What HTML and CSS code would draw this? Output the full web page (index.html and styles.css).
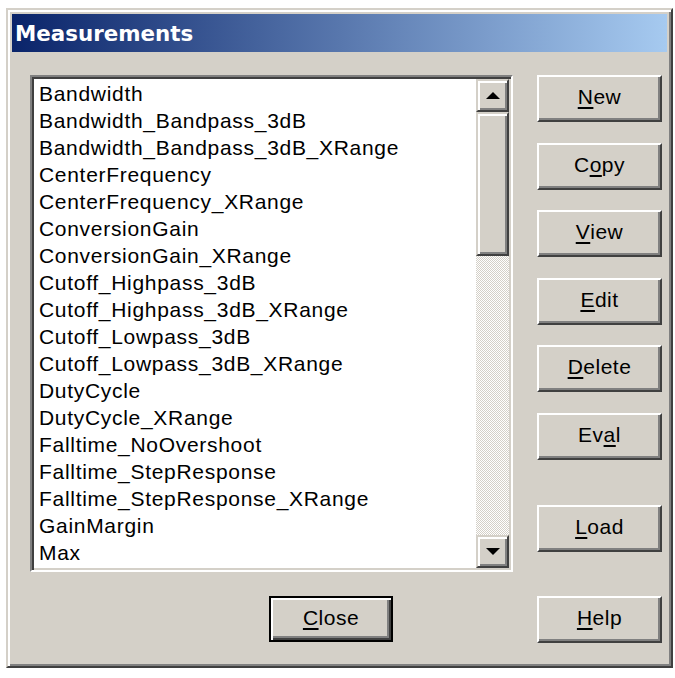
FILE: index.html
```html
<!DOCTYPE html>
<html lang="en">
<head>
<meta charset="UTF-8" />
<meta name="viewport" content="width=device-width, initial-scale=1" />
<title>Measurements</title>
<link rel="stylesheet" href="styles.css">
</head>
<body>
  <div class="window">
    <div class="titlebar">Measurements</div>
    <div class="content">
      <div class="left">
        <div class="listbox">
          <ul class="items">
            <li>Bandwidth</li>
            <li>Bandwidth_Bandpass_3dB</li>
            <li>Bandwidth_Bandpass_3dB_XRange</li>
            <li>CenterFrequency</li>
            <li>CenterFrequency_XRange</li>
            <li>ConversionGain</li>
            <li>ConversionGain_XRange</li>
            <li>Cutoff_Highpass_3dB</li>
            <li>Cutoff_Highpass_3dB_XRange</li>
            <li>Cutoff_Lowpass_3dB</li>
            <li>Cutoff_Lowpass_3dB_XRange</li>
            <li>DutyCycle</li>
            <li>DutyCycle_XRange</li>
            <li>Falltime_NoOvershoot</li>
            <li>Falltime_StepResponse</li>
            <li>Falltime_StepResponse_XRange</li>
            <li>GainMargin</li>
            <li>Max</li>
          </ul>
          <div class="scrollbar">
            <div class="sb-btn">
              <svg width="14" height="7" viewBox="0 0 14 7"><polygon points="0,7 7,0 14,7" fill="#000"/></svg>
            </div>
            <div class="sb-track">
              <div class="sb-thumb"></div>
            </div>
            <div class="sb-btn">
              <svg width="14" height="7" viewBox="0 0 14 7"><polygon points="0,0 14,0 7,7" fill="#000"/></svg>
            </div>
          </div>
        </div>
        <button class="btn default close-btn"><u>C</u>lose</button>
      </div>
      <div class="right">
        <div class="btn-group">
          <button class="btn"><u>N</u>ew</button>
          <button class="btn">C<u>o</u>py</button>
          <button class="btn"><u>V</u>iew</button>
          <button class="btn"><u>E</u>dit</button>
          <button class="btn"><u>D</u>elete</button>
          <button class="btn">Ev<u>a</u>l</button>
        </div>
        <button class="btn load-btn"><u>L</u>oad</button>
        <button class="btn help-btn"><u>H</u>elp</button>
      </div>
    </div>
  </div>
</body>
</html>
```

FILE: styles.css
```css
/* Classic dialog look */
* {
  box-sizing: border-box;
}
body {
  margin: 0;
  background: #ffffff;
  font-family: "Liberation Sans", Arial, sans-serif;
  color: #000;
}
.window {
  margin: 8px 0 0 6px;
  width: 667px;
  height: 660px;
  padding: 4px;
  background: #d4d0c8;
  border: 2px solid;
  border-color: #d4d0c8 #404040 #404040 #d4d0c8;
  box-shadow: inset 2px 2px #ffffff, inset -2px -2px #808080;
  display: flex;
  flex-direction: column;
}
.titlebar {
  height: 38px;
  padding: 1px 0 0 3px;
  display: flex;
  align-items: center;
  background: linear-gradient(to right, #0a246a, #a6caf0);
  color: #ffffff;
  font-family: "DejaVu Sans", Verdana, sans-serif;
  font-weight: 700;
  font-size: 21.4px;
}
.content {
  display: flex;
  gap: 24px;
  padding: 23px 0 0 18px;
}
.left {
  width: 483px;
  display: flex;
  flex-direction: column;
}

/* List box with its scrollbar */
.listbox {
  height: 497px;
  display: flex;
  background: #ffffff;
  border: 2px solid;
  border-color: #808080 #ffffff #ffffff #808080;
  box-shadow: inset 2px 2px #404040, inset -2px -2px #d4d0c8;
  padding: 2px;
}
.items {
  flex-grow: 1;
  list-style: none;
  margin: 0;
  padding: 1px 0 0 5px;
  overflow: hidden;
  font-size: 21px;
  letter-spacing: 0.7px;
  line-height: 27px;
  white-space: nowrap;
}
.scrollbar {
  width: 33px;
  display: flex;
  flex-direction: column;
}
.sb-btn {
  height: 33px;
  display: flex;
  align-items: center;
  justify-content: center;
  background: #d4d0c8;
  border: 2px solid;
  border-color: #d4d0c8 #404040 #404040 #d4d0c8;
  box-shadow: inset 2px 2px #ffffff, inset -2px -2px #808080;
}
.sb-track {
  flex-grow: 1;
  background-color: #d4d0c8;
  background-image: repeating-conic-gradient(#ffffff 0 25%, #d4d0c8 0 50%);
  background-size: 2px 2px;
}
.sb-thumb {
  height: 144px;
  background: #d4d0c8;
  border: 2px solid;
  border-color: #d4d0c8 #404040 #404040 #d4d0c8;
  box-shadow: inset 2px 2px #ffffff, inset -2px -2px #808080;
}

/* Push buttons */
.btn {
  width: 125px;
  height: 47px;
  margin: 0;
  padding: 0 0 3px 0;
  background: #d4d0c8;
  border: 2px solid;
  border-color: #ffffff #404040 #404040 #ffffff;
  box-shadow: inset -2px -2px #808080;
  font-family: "Liberation Sans", Arial, sans-serif;
  font-size: 21px;
  letter-spacing: 0.5px;
  color: #000;
  display: flex;
  align-items: center;
  justify-content: center;
}
.btn u {
  text-underline-offset: 3px;
  text-decoration-thickness: 2px;
}
.btn.default {
  border-color: #000;
  box-shadow: inset 2px 2px #ffffff, inset -2px -2px #404040, inset -4px -4px #808080;
}
.close-btn {
  margin: 24px 0 0 239px;
  height: 46px;
  width: 124px;
}
.right {
  display: flex;
  flex-direction: column;
}
.btn-group {
  display: flex;
  flex-direction: column;
  gap: 20.6px;
}
.load-btn {
  margin-top: 45px;
}
.help-btn {
  margin-top: 44px;
}
```
